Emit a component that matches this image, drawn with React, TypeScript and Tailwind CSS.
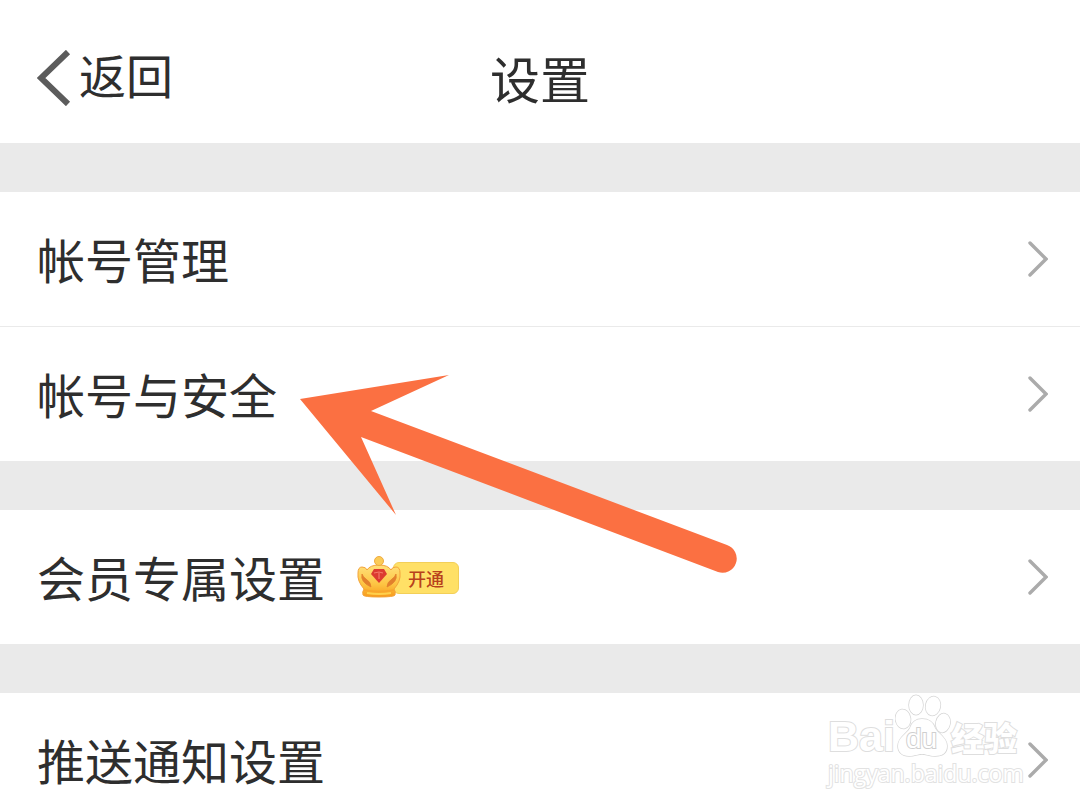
import type { ReactNode } from "react";

function Chevron() {
  return (
    <svg className="h-9 w-5 shrink-0" viewBox="0 0 20 36" fill="none" aria-hidden="true">
      <path d="M2 2 L18 18 L2 34" stroke="#ababab" strokeWidth="3.4" strokeLinecap="round" strokeLinejoin="miter" />
    </svg>
  );
}

function Row({ label, children }: { label: string; children?: ReactNode }) {
  return (
    <a href="#" className="flex h-[134px] items-center bg-white pr-8 pl-[37px]">
      <span className="pb-0.5 text-5xl">{label}</span>
      {children}
      <span className="ml-auto">
        <Chevron />
      </span>
    </a>
  );
}

function VipBadge() {
  return (
    <span className="ml-8 flex items-center pt-px">
      <svg className="relative z-10 h-[44px] w-[44px]" viewBox="0 0 44 44" aria-hidden="true">
        <defs>
          <linearGradient id="gold" x1="0" y1="0" x2="0" y2="1">
            <stop offset="0" stopColor="#ffe07a" />
            <stop offset="0.6" stopColor="#fdc443" />
            <stop offset="1" stopColor="#f79a1c" />
          </linearGradient>
        </defs>
        <path
          d="M6 39 Q5 36 7 33 Q0 25 1 17 Q1 11 5 11 Q9 11 10 14 Q13 9 22 9 Q31 9 34 14 Q35 11 39 11 Q43 11 43 17 Q44 25 37 33 Q39 36 38 39 Q37 41 22 41 Q7 41 6 39Z"
          fill="url(#gold)"
          stroke="#f3a33a"
          strokeWidth="1"
        />
        <circle cx="22" cy="5" r="4.5" fill="#fbcb57" stroke="#efaa40" strokeWidth="1" />
        <path d="M5 18 Q3 26 14 31 Q14 26 9 23 Q6 21 5 18Z M39 18 Q41 26 30 31 Q30 26 35 23 Q38 21 39 18Z" fill="#e2802c" stroke="#e2802c" strokeWidth="0.8" />
        <path d="M7 34 Q22 37 37 34" fill="none" stroke="#f8a52c" strokeWidth="1.6" />
        <path d="M10 37 Q22 39 34 37" fill="none" stroke="#ffd04c" strokeWidth="2" />
        <path d="M17 13 L27 13 L30 18 L22 27 L14 18Z" fill="#dc3b30" />
        <path d="M17 17 L22 16 L26 17 M22 17 L22 23" fill="none" stroke="#f47a68" strokeWidth="1.2" />
      </svg>
      <span className="-ml-2 flex h-8 items-center rounded-md border border-[#f3cf58] bg-[#ffe066] pr-3.5 pl-3.5 text-lg font-medium text-[#b8401c]">
        开通
      </span>
    </span>
  );
}

function Watermark() {
  return (
    <div className="pointer-events-none absolute top-0 right-[57px] w-[195px] text-white [-webkit-text-stroke:2px_#dedede] [paint-order:stroke_fill]">
      <div className="flex h-16 items-end leading-none font-bold">
        <span className="font-['Liberation_Sans'] text-[43px] leading-[42px]">Bai</span>
        <span className="relative h-16 w-14 shrink-0">
          <svg className="absolute inset-0 h-16 w-14" viewBox="0 0 56 66" preserveAspectRatio="xMidYMin slice" fill="#fff" stroke="#d6d6d6" strokeWidth="1.5" aria-hidden="true">
            <ellipse cx="8" cy="26" rx="7.5" ry="9.5" transform="rotate(-8 8 26)" />
            <ellipse cx="21" cy="12" rx="7" ry="9.7" />
            <ellipse cx="38" cy="13" rx="7.3" ry="9.5" transform="rotate(12 38 13)" />
            <ellipse cx="48" cy="30" rx="7" ry="9.5" transform="rotate(12 48 30)" />
            <path d="M27 26 C34 26 38 29 40 35 C42 40 52 44 52 53 C52 60 47 63 40 63 C34 63 31 61 27 61 C23 61 20 63 14 63 C7 63 3 59 3 53 C3 44 12 41 15 35 C17 29 21 26 27 26Z" />
          </svg>
          <span className="absolute bottom-1 left-[11px] font-['Liberation_Sans'] text-[28px] font-normal [-webkit-text-stroke:2px_#cfcfcf]">
            du
          </span>
        </span>
        <span className="text-[33px] leading-10 font-black">经验</span>
      </div>
      <div className="pt-0.5 font-['Open_Sans'] text-[23px] leading-7 [-webkit-text-stroke:2px_#e2e2e2]">jingyan.baidu.com</div>
    </div>
  );
}

export default function App() {
  return (
    <div className="relative min-h-screen overflow-hidden bg-[#eaeaea] font-['Noto_Sans_CJK_SC',sans-serif] text-[#2e2e2e]">
      <header className="grid h-[143px] grid-cols-3 items-center bg-white pt-3">
        <button type="button" className="flex items-center pl-[37px] text-[47px] leading-none">
          <svg className="mr-2 h-14 w-[34px]" viewBox="0 0 34 56" fill="none" aria-hidden="true">
            <path d="M31 2 L4 28 L31 54" stroke="#5c5c5c" strokeWidth="6" />
          </svg>
          <span className="pb-2">返回</span>
        </button>
        <h1 className="pb-px text-center text-[50px] leading-none">设置</h1>
      </header>

      <main className="mt-[49px] flex flex-col gap-[49px]">
        <section className="relative flex flex-col gap-px">
          <Row label="帐号管理" />
          <Row label="帐号与安全" />
          <svg className="pointer-events-none absolute top-[182px] left-[299px] h-[202px] w-[440px]" viewBox="299 374 440 202" fill="#fb7042" aria-hidden="true">
            <path d="M300 399 L449 375 L371 411 L727 545 A14 14 0 0 1 718 572 L361 437 L396 515Z" />
          </svg>
        </section>
        <section>
          <Row label="会员专属设置">
            <VipBadge />
          </Row>
        </section>
        <section className="relative">
          <Row label="推送通知设置" />
          <Watermark />
        </section>
      </main>
    </div>
  );
}
